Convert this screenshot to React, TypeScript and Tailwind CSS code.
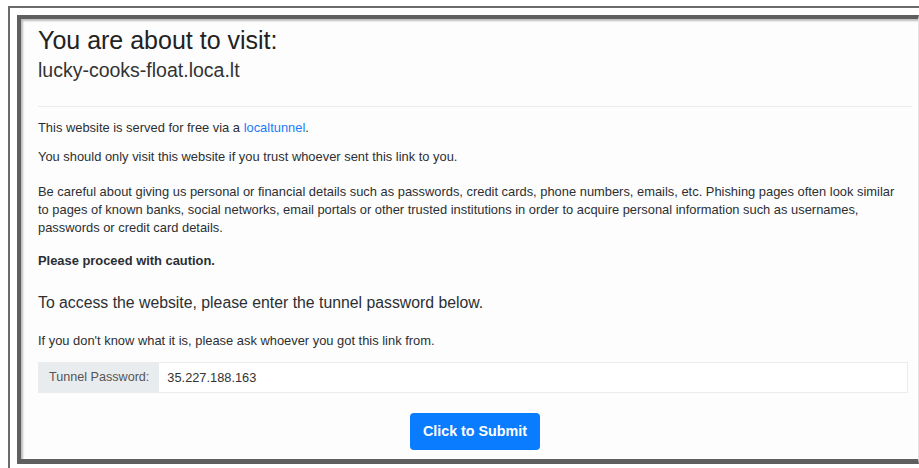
import React from 'react';

const font = { fontFamily: '"Liberation Sans", Arial, sans-serif' };

const Para = ({ children, className = '' }: { children: React.ReactNode; className?: string }) => (
  <p className={`text-[12.9px] leading-[18.3px] text-[#2b2f33] ${className}`}>{children}</p>
);

export default function App() {
  return (
    <div className="h-[468px] w-[919px] overflow-hidden bg-white pl-[8px] pt-[6px]" style={font}>
      {/* outer window edge */}
      <div className="h-full border-l-2 border-t-2 border-[#6b6b6b] pl-[7px] pt-[7px]">
        {/* page frame */}
        <div className="h-[449px] border-b-[5px] border-l-[4px] border-r border-t-[4px] border-b-[#5f5f5f] border-l-[#5f5f5f] border-r-[#e2e2e2] border-t-[#5f5f5f] bg-[#fdfdfd] pl-[17px] pr-[6px] pt-[6px] shadow-[inset_2px_2px_2px_rgba(0,0,0,0.25)]">
          <h2 className="text-[25px] leading-[30px] text-[#222]">You are about to visit:</h2>
          <h5 className="mt-[3.5px] text-[19.5px] leading-[23px] text-[#333]">lucky-cooks-float.loca.lt</h5>
          <hr className="mt-[24.5px] border-t border-[#ececec]" />

          <Para className="mt-[11.85px]">
            This website is served for free via a <a className="text-[#1a7cf5]">localtunnel</a>.
          </Para>
          <Para className="mt-[10.4px]">You should only visit this website if you trust whoever sent this link to you.</Para>
          <Para className="mt-[16.7px] max-w-[862px]">
            Be careful about giving us personal or financial details such as passwords, credit cards, phone numbers, emails, etc. Phishing pages often look similar to pages of known banks, social networks, email portals or other trusted institutions in order to acquire personal information such as usernames, passwords or credit card details.
          </Para>
          <Para className="mt-[14.1px] font-bold">Please proceed with caution.</Para>

          <h4 className="mt-[23.35px] text-[15.8px] leading-[19px] text-[#2b2f33]">
            To access the website, please enter the tunnel password below.
          </h4>
          <Para className="mt-[20.35px]">If you don't know what it is, please ask whoever you got this link from.</Para>

          <div className="mt-[11.15px] flex h-[31px] w-[870px] border border-[#ececec]">
            <span className="flex items-center bg-[#e9ecef] px-[10px] text-[12.6px] text-[#555]">Tunnel Password:</span>
            <span className="flex flex-1 items-center bg-white px-[8px] text-[12.8px] text-[#333]">35.227.188.163</span>
          </div>

          <div className="mt-[20px] flex justify-center">
            <button className="flex h-[37px] w-[130px] items-center justify-center rounded-[4px] bg-[#0a7cff] text-[14.3px] font-bold text-white">
              Click to Submit
            </button>
          </div>
        </div>
      </div>
    </div>
  );
}
